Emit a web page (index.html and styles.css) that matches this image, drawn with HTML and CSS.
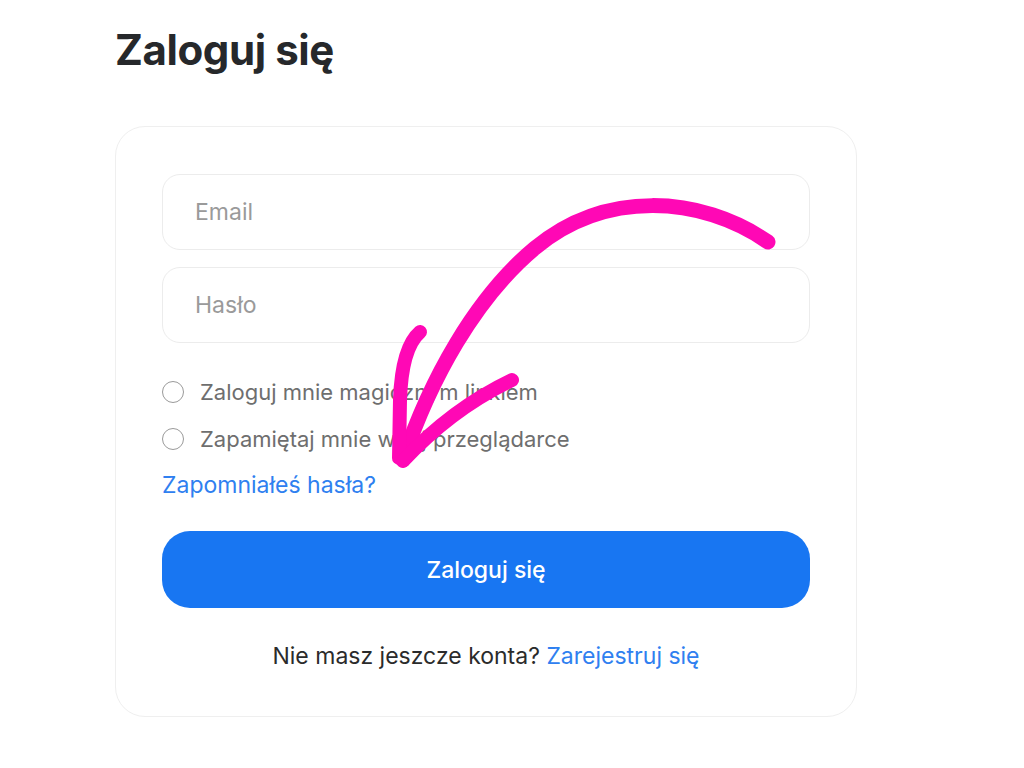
FILE: index.html
```html
<!DOCTYPE html>
<html lang="pl">
<head>
<meta charset="utf-8">
<title>Zaloguj się</title>
<link rel="stylesheet" href="styles.css">
</head>
<body>
<main class="page">
  <h1 class="title">Zaloguj się</h1>
  <div class="card">
    <div class="field"><span class="placeholder">Email</span></div>
    <div class="field"><span class="placeholder">Hasło</span></div>
    <div class="options">
      <label class="option"><span class="radio"></span>Zaloguj mnie magicznym linkiem</label>
      <label class="option"><span class="radio"></span>Zapamiętaj mnie w tej przeglądarce</label>
    </div>
    <a class="forgot" href="#">Zapomniałeś hasła?</a>
    <button class="submit" type="button">Zaloguj się</button>
    <p class="signup">Nie masz jeszcze konta? <a href="#">Zarejestruj się</a></p>
  </div>
  <svg class="annotation" width="1024" height="768" viewBox="0 0 1024 768" aria-hidden="true">
    <g fill="none" stroke="#ff08b5" stroke-linecap="round" stroke-linejoin="round">
      <path d="M768,242 C700,195 605,190 535,248 C475,298 430,380 403,460" stroke-width="15"/>
      <path d="M420,332 C406,344 401,370 400,400 L399,458" stroke-width="14"/>
      <path d="M512,380 C470,400 432,430 403,461" stroke-width="14"/>
    </g>
  </svg>
</main>
</body>
</html>
```

FILE: styles.css
```css
html, body {
  margin: 0;
  padding: 0;
  background: #ffffff;
}

body {
  font-family: Inter, "Liberation Sans", sans-serif;
  color: #2b2b2b;
}

.page {
  position: relative;
  width: 1024px;
  height: 768px;
  padding: 22px 0 0 115px;
  box-sizing: border-box;
  overflow: hidden;
}

.title {
  margin: 0 0 48px 0;
  font-size: 42px;
  line-height: 56px;
  font-weight: 700;
  color: #26282b;
  letter-spacing: -0.4px;
}

.card {
  width: 742px;
  box-sizing: border-box;
  border: 1.5px solid #efefef;
  border-radius: 30px;
  padding: 47px 46px 46px 46px;
  display: flex;
  flex-direction: column;
}

.field {
  height: 76px;
  box-sizing: border-box;
  border: 1.5px solid #ececec;
  border-radius: 18px;
  display: flex;
  align-items: center;
  padding-left: 32px;
  margin-bottom: 17px;
}

.placeholder {
  font-size: 23px;
  color: #9a9a9a;
}

.options {
  display: flex;
  flex-direction: column;
  gap: 21px;
  margin-top: 19px;
}

.option {
  display: flex;
  align-items: center;
  font-size: 22px;
  color: #6e6e6e;
  line-height: 26px;
}

.radio {
  width: 20px;
  height: 20px;
  border: 1.5px solid #9a9a9a;
  border-radius: 50%;
  margin-right: 16px;
  flex: none;
}

.forgot {
  margin-top: 20px;
  font-size: 23px;
  line-height: 26px;
  color: #2f80f0;
  text-decoration: none;
  align-self: flex-start;
}

.submit {
  margin-top: 33px;
  height: 77px;
  border: none;
  border-radius: 28px;
  background: #1876f2;
  color: #ffffff;
  font-family: Inter, "Liberation Sans", sans-serif;
  font-size: 23px;
  font-weight: 500;
}

.signup {
  margin: 34px 0 0 0;
  text-align: center;
  font-size: 23px;
  line-height: 28px;
  color: #2b2b2b;
}

.signup a {
  color: #2f80f0;
  text-decoration: none;
}

.annotation {
  position: absolute;
  left: 0;
  top: 0;
  pointer-events: none;
}
```
